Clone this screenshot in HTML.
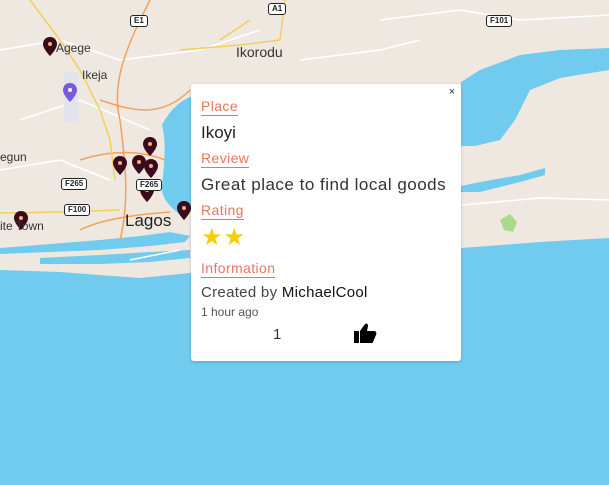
<!DOCTYPE html>
<html><head><style>
body{margin:0;width:609px;height:485px;overflow:hidden;background:#71cbef;font-family:"Liberation Sans",sans-serif;position:relative}
svg{position:absolute;left:0;top:0}
.pop{position:absolute;left:191px;top:84px;width:270px;height:277px;background:#fff;border-radius:3px;box-shadow:0 1px 3px rgba(0,0,0,.2)}
.lbl{position:absolute;left:10px;color:#e6765c;font-size:14px;letter-spacing:.4px;border-bottom:1px solid #e6765c;padding-bottom:1px;line-height:16px}
.t{position:absolute;left:10px;color:#222;white-space:nowrap}
.x{position:absolute;right:6px;top:2px;font-size:11px;color:#333}
.sh{position:absolute;background:#fff;border:1px solid #222;border-radius:3px;font-size:8px;font-weight:bold;padding:0 3px;line-height:10px;color:#222}
.lab{position:absolute;font-size:12px;color:#333}
</style></head><body>
<svg width="609" height="485" viewBox="0 0 609 485">
<defs><g id="pin"><path d="M0 0c-4 0-7 3-7 7c0 5 7 12 7 12s7-7 7-12c0-4-3-7-7-7z" fill="#3b0a1c"/><circle cx="0" cy="7" r="2" fill="#e9b47a"/></g></defs>
<path d="M0 0H609V238L540 242L462 248L430 252L400 262L300 266L200 272L140 278L60 272L0 270Z" fill="#eee8e1"/>
<path d="M162 125C166 140 165 160 162 185C160 200 175 210 180 215L195 210L195 95C180 100 170 110 162 125Z" fill="#71cbef"/>
<path d="M0 248L50 244L100 240L140 236L170 232L190 236L185 242L150 246L100 250L50 252L0 254Z" fill="#71cbef"/>
<path d="M40 258L100 255L150 252L190 250L190 258L150 262L100 264L40 264Z" fill="#71cbef"/>
<path d="M461 82L480 70L520 55L560 50L609 48V70L560 78L530 90L515 120L500 140L475 146L461 146Z" fill="#71cbef"/>
<path d="M461 186L480 182L520 175L545 168L545 175L520 182L480 192L461 192Z" fill="#71cbef"/>
<path d="M500 220L510 214L517 222L513 232L504 230Z" fill="#a9d98a"/>
<g fill="none" stroke="#fff" stroke-width="1.5">
<path d="M0 50L60 40L120 60L200 50L260 30M20 120L80 100L150 130M0 170L60 160L110 180M380 20L460 10L520 20L609 15M300 60L380 50L420 40M462 205L540 198L609 200M130 260L180 250"/>
</g>
<g fill="none" stroke="#f5a05a" stroke-width="1.5">
<path d="M150 0C130 40 110 80 120 120C125 160 130 200 120 240M100 100C130 110 160 120 190 90M80 160C110 150 140 150 165 160M80 230C100 220 130 215 170 212"/>
</g>
<g fill="none" stroke="#f3cf5a" stroke-width="1.5">
<path d="M30 0L60 40L80 70L100 110L110 140L115 180M0 213L60 212L120 210M180 50L240 45L280 40L285 0M220 40L250 20"/>
</g>
<path d="M64 72h14v50h-14z" fill="#e3e3ee"/>
<use href="#pin" x="50" y="37"/><use href="#pin" x="21" y="211"/><use href="#pin" x="120" y="156"/><use href="#pin" x="139" y="155"/><use href="#pin" x="150" y="137"/><use href="#pin" x="151" y="159"/><use href="#pin" x="147" y="183"/><use href="#pin" x="184" y="201"/>
<path d="M70 83c-4 0-7 3-7 7c0 5 7 12 7 12s7-7 7-12c0-4-3-7-7-7z" fill="#7a5ad8"/><circle cx="70" cy="90" r="2" fill="#fff"/>
</svg>
<div class="sh" style="left:130px;top:15px">E1</div>
<div class="sh" style="left:268px;top:3px">A1</div>
<div class="sh" style="left:486px;top:15px">F101</div>
<div class="sh" style="left:61px;top:178px">F265</div>
<div class="sh" style="left:64px;top:204px">F100</div>
<div class="sh" style="left:136px;top:179px">F265</div>
<div class="lab" style="left:56px;top:41px">Agege</div>
<div class="lab" style="left:82px;top:68px">Ikeja</div>
<div class="lab" style="left:236px;top:44px;font-size:14px">Ikorodu</div>
<div class="lab" style="left:0px;top:150px">egun</div>
<div class="lab" style="left:0px;top:219px">ite Town</div>
<div class="lab" style="left:125px;top:211px;font-size:17px;color:#222">Lagos</div>
<div class="pop">
<div class="x">×</div>
<div class="lbl" style="top:14px">Place</div>
<div class="t" style="top:39px;font-size:17px">Ikoyi</div>
<div class="lbl" style="top:66px">Review</div>
<div class="t" style="top:91px;font-size:17px;color:#333;letter-spacing:.5px">Great place to find local goods</div>
<div class="lbl" style="top:118px">Rating</div>
<div class="t" style="top:139px;font-size:24px;color:#f7cf00;letter-spacing:1px">★★</div>
<div class="lbl" style="top:176px">Information</div>
<div class="t" style="top:200px;font-size:15px;color:#444;letter-spacing:.3px">Created by <span style="color:#111">MichaelCool</span></div>
<div class="t" style="top:221px;font-size:12px;color:#555">1 hour ago</div>
<div class="t" style="left:82px;top:242px;font-size:15px;color:#333">1</div>
<svg style="left:162px;top:238px" width="24" height="22" viewBox="0 0 24 22"><path d="M1 9h5v12H1zM7 9l5-7c2-1 3 0 3 2l-1 5h7c2 0 3 2 2 4l-3 7c0 1-1 1-2 1H7z" fill="#000"/></svg>
</div>
</body></html>
